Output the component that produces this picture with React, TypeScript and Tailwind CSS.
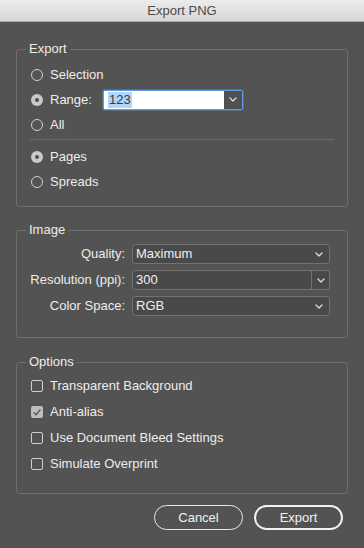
import type { ReactNode } from 'react';

export default function App() {
  return (
    <div className="w-[364px] h-[548px] overflow-hidden flex flex-col bg-[#535353] font-['Liberation_Sans',Arial,sans-serif] text-[#ededed] text-[13px] select-none">
      {/* Title bar */}
      <div className="h-[22px] shrink-0 flex items-center justify-center bg-gradient-to-b from-[#ececec] to-[#d6d6d6] border-b border-[#a9a9a9] text-[13px] text-[#4b4b4b]">
        Export PNG
      </div>

      <div className="flex flex-col px-4">
        {/* Export */}
        <Group title="Export" className="mt-[19px] pt-[5px] pb-[12px] pr-[13px]">
          <Radio label="Selection" />
          <Radio label="Range:" checked labelWidth="w-[53px]">
            <RangeBox />
          </Radio>
          <Radio label="All" />
          <div className="mt-[2px] mb-[4px] ml-[4px] h-px bg-[#6a6a6a]" />
          <Radio label="Pages" checked />
          <Radio label="Spreads" />
        </Group>

        {/* Image */}
        <Group title="Image" className="mt-[15px] pt-[6px] pb-[21px] pr-[17px]">
          <div className="grid grid-cols-[99px_1fr] gap-x-[7px] gap-y-[6px] items-center">
            <span className="text-right">Quality:</span>
            <Select value="Maximum" />
            <span className="text-right">Resolution (ppi):</span>
            <Select value="300" combo />
            <span className="text-right">Color Space:</span>
            <Select value="RGB" />
          </div>
        </Group>

        {/* Options */}
        <Group title="Options" className="mt-[16px] pt-[3px] pb-[16px] pr-[13px]">
          <Check label="Transparent Background" />
          <Check label="Anti-alias" checked />
          <Check label="Use Document Bleed Settings" />
          <Check label="Simulate Overprint" />
        </Group>

        <div className="mt-[11px] pr-[5px] flex justify-end gap-[11px]">
          <button className="w-[89px] h-[25px] rounded-full border border-[#e6e6e6] text-[13px] text-[#f2f2f2] leading-none">
            Cancel
          </button>
          <button className="w-[89px] h-[25px] rounded-full border-2 border-[#f2f2f2] text-[13px] text-[#f2f2f2] leading-none">
            Export
          </button>
        </div>
      </div>
    </div>
  );
}

function Group({ title, className, children }: { title: string; className: string; children: ReactNode }) {
  return (
    <fieldset className={`border border-[#6e6e6e] rounded-[3px] pl-[9px] ${className}`}>
      <legend className="px-[3px] text-[13px] leading-[16px] text-[#ededed]">{title}</legend>
      {children}
    </fieldset>
  );
}

function Radio({
  label,
  checked,
  labelWidth,
  children,
}: {
  label: string;
  checked?: boolean;
  labelWidth?: string;
  children?: ReactNode;
}) {
  return (
    <div className="h-[25px] ml-[5px] flex items-center">
      {checked ? (
        <span className="w-[12px] h-[12px] rounded-full bg-[#c9c9c9] grid place-items-center shrink-0">
          <span className="w-[4px] h-[4px] rounded-full bg-[#4e4e4e]" />
        </span>
      ) : (
        <span className="w-[12px] h-[12px] rounded-full border border-[#cfcfcf] shrink-0" />
      )}
      <span className={`ml-[7px] ${labelWidth ?? ''}`}>{label}</span>
      {children}
    </div>
  );
}

function RangeBox() {
  return (
    <div className="w-[140px] h-[20px] flex border border-[#5b9de6] rounded-[2px] shadow-[0_0_0_1px_rgba(91,157,230,0.35)]">
      <div className="flex-1 bg-white flex items-center pl-[4px]">
        <span className="bg-[#b3d4fc] text-[#3a3a3a] text-[13px] leading-[16px] px-px">123</span>
      </div>
      <div className="w-[18px] bg-[#505050] grid place-items-center text-[#dcdcdc]">
        <Chevron />
      </div>
    </div>
  );
}

function Select({ value, combo }: { value: string; combo?: boolean }) {
  return (
    <div className="h-[20px] flex items-center rounded-[3px] border border-[#737373] bg-[#494949]">
      <span className="flex-1 pl-[3px] text-[13px] text-[#f0f0f0]">{value}</span>
      {combo ? (
        <span className="w-[18px] h-full border-l border-[#737373] grid place-items-center text-[#dedede]">
          <Chevron />
        </span>
      ) : (
        <span className="pr-[6px] text-[#dedede] flex">
          <Chevron />
        </span>
      )}
    </div>
  );
}

function Check({ label, checked }: { label: string; checked?: boolean }) {
  return (
    <div className="h-[26px] ml-[5px] flex items-center">
      {checked ? (
        <span className="w-[12px] h-[12px] rounded-[2px] bg-[#bdbdbd] grid place-items-center shrink-0">
          <svg width="8" height="7" viewBox="0 0 8 7" fill="none" stroke="#5a5a5a" strokeWidth="1.4" strokeLinecap="round" strokeLinejoin="round">
            <path d="M1 3.8 3 5.8 7 1" />
          </svg>
        </span>
      ) : (
        <span className="w-[12px] h-[12px] rounded-[2px] border border-[#cfcfcf] shrink-0" />
      )}
      <span className="ml-[7px]">{label}</span>
    </div>
  );
}

function Chevron() {
  return (
    <svg width="8" height="5" viewBox="0 0 8 5" fill="none" stroke="currentColor" strokeWidth="1.3" strokeLinecap="round" strokeLinejoin="round">
      <path d="M1 1l3 3 3-3" />
    </svg>
  );
}
